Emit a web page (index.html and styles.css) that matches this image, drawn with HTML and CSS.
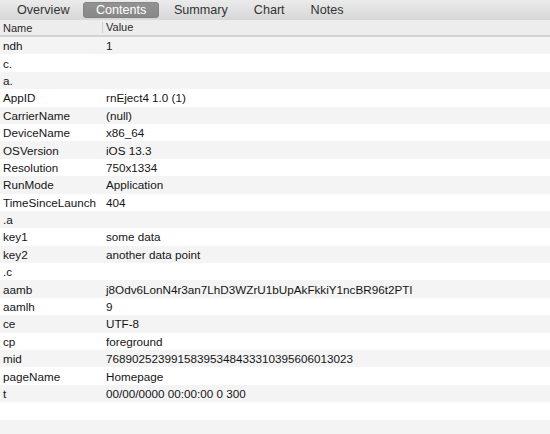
FILE: index.html
```html
<!DOCTYPE html>
<html>
<head>
<meta charset="utf-8">
<link rel="stylesheet" href="styles.css">
</head>
<body>
<div class="tabbar">
  <div class="tab">Overview</div>
  <div class="tab active">Contents</div>
  <div class="tab">Summary</div>
  <div class="tab">Chart</div>
  <div class="tab">Notes</div>
</div>
<div class="header">
  <div class="hcell name">Name</div>
  <div class="hcell value">Value</div>
</div>
<div class="rows">
  <div class="row"><div class="c1">ndh</div><div class="c2">1</div></div>
  <div class="row"><div class="c1">c.</div><div class="c2"></div></div>
  <div class="row"><div class="c1">a.</div><div class="c2"></div></div>
  <div class="row"><div class="c1">AppID</div><div class="c2">rnEject4 1.0 (1)</div></div>
  <div class="row"><div class="c1">CarrierName</div><div class="c2">(null)</div></div>
  <div class="row"><div class="c1">DeviceName</div><div class="c2">x86_64</div></div>
  <div class="row"><div class="c1">OSVersion</div><div class="c2">iOS 13.3</div></div>
  <div class="row"><div class="c1">Resolution</div><div class="c2">750x1334</div></div>
  <div class="row"><div class="c1">RunMode</div><div class="c2">Application</div></div>
  <div class="row"><div class="c1">TimeSinceLaunch</div><div class="c2">404</div></div>
  <div class="row"><div class="c1">.a</div><div class="c2"></div></div>
  <div class="row"><div class="c1">key1</div><div class="c2">some data</div></div>
  <div class="row"><div class="c1">key2</div><div class="c2">another data point</div></div>
  <div class="row"><div class="c1">.c</div><div class="c2"></div></div>
  <div class="row"><div class="c1">aamb</div><div class="c2">j8Odv6LonN4r3an7LhD3WZrU1bUpAkFkkiY1ncBR96t2PTI</div></div>
  <div class="row"><div class="c1">aamlh</div><div class="c2">9</div></div>
  <div class="row"><div class="c1">ce</div><div class="c2">UTF-8</div></div>
  <div class="row"><div class="c1">cp</div><div class="c2">foreground</div></div>
  <div class="row"><div class="c1">mid</div><div class="c2">76890252399158395348433310395606013023</div></div>
  <div class="row"><div class="c1">pageName</div><div class="c2">Homepage</div></div>
  <div class="row"><div class="c1">t</div><div class="c2">00/00/0000 00:00:00 0 300</div></div>
  <div class="row"><div class="c1"></div><div class="c2"></div></div>
  <div class="row"><div class="c1"></div><div class="c2"></div></div>
</div>
</body>
</html>
```
FILE: styles.css
```css
html, body {
  margin: 0;
  padding: 0;
  background: #ffffff;
  overflow: hidden;
}
body {
  width: 550px;
  height: 434px;
  font-family: "Liberation Sans", Arial, sans-serif;
  color: #151515;
}
.tabbar {
  height: 20px;
  display: flex;
  align-items: center;
  padding-left: 4px;
  background: linear-gradient(#ebebeb, #d7d7d7);
  box-sizing: border-box;
}
.tab {
  font-size: 12.6px;
  color: #333333;
  padding: 0 13px;
  height: 16px;
  line-height: 16px;
}
.tab.active {
  background: linear-gradient(#939393, #878787);
  color: #ffffff;
  border-radius: 4px;
  padding: 0 12.5px;
  margin: 0 2px 0 1px;
  box-shadow: inset 0 0 0 0.5px #7a7a7a;
}
.header {
  display: flex;
  height: 15px;
  background: #ededed;
  border-bottom: 2px solid #d3d3d3;
  align-items: center;
  font-size: 11px;
  color: #2a2a2a;
}
.hcell.name {
  width: 99px;
  padding-left: 3px;
}
.hcell.value {
  border-left: 1px solid #d0d0d0;
  padding-left: 3px;
  height: 11px;
  line-height: 11px;
}
.rows {
  display: flex;
  flex-direction: column;
}
.row {
  display: flex;
  height: 17.4px;
  align-items: center;
  font-size: 11.7px;
  flex-shrink: 0;
}
.row:nth-child(odd) {
  background: #f4f4f4;
}
.c1 {
  width: 103px;
  padding-left: 3px;
  white-space: nowrap;
}
.c2 {
  white-space: nowrap;
}
```
